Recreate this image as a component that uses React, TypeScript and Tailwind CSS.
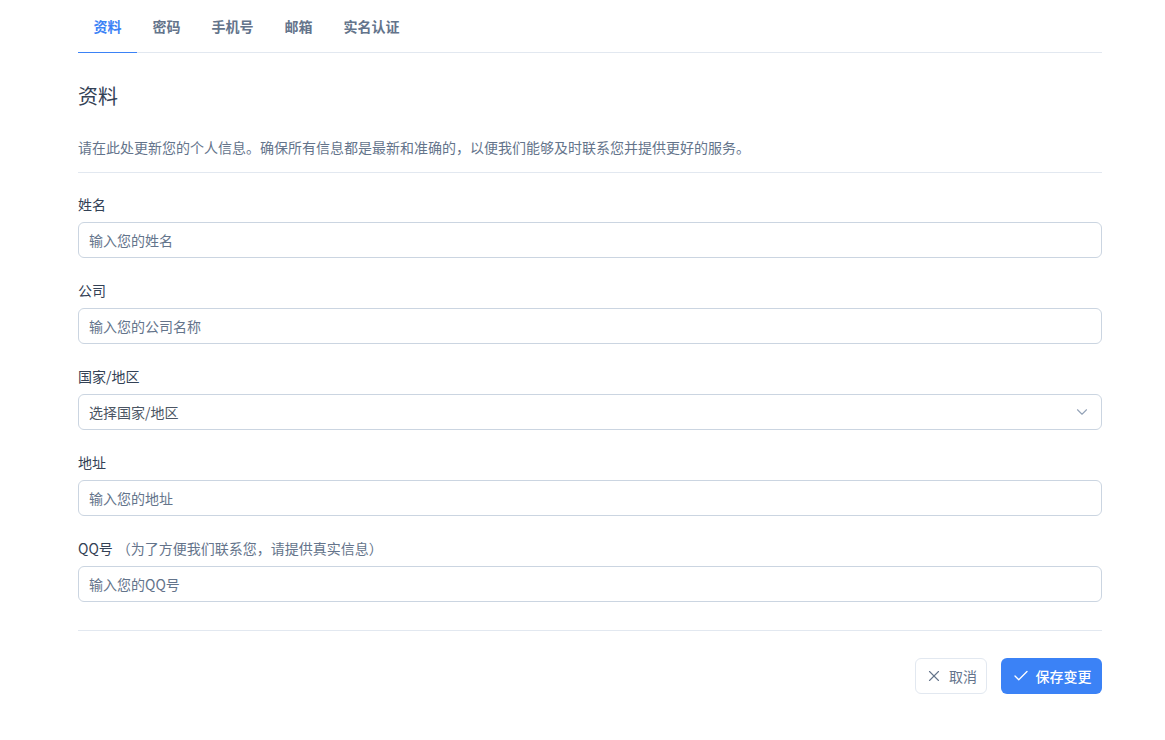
import { Check, ChevronDown, X } from "lucide-react";

const tabs = ["资料", "密码", "手机号", "邮箱", "实名认证"];

const font = { fontFamily: '"Noto Sans CJK SC", "Noto Sans", sans-serif' };

function Field({ label, hint, placeholder }: { label: string; hint?: string; placeholder: string }) {
  return (
    <div>
      <label className="block h-5 text-sm leading-5 text-[#334155]">
        {label}
        {hint && <span className="ml-1 text-[#64748b]">{hint}</span>}
      </label>
      <input
        placeholder={placeholder}
        className="mt-2 block h-9 w-full rounded-md border border-[#cbd5e1] bg-white px-2.5 text-sm text-[#334155] outline-none placeholder:text-[#64748b]"
      />
    </div>
  );
}

export default function App() {
  return (
    <div className="min-h-screen bg-white" style={font}>
      <div className="ml-[78px] w-[1024px]">
        <nav className="flex border-b border-[#e2e8f0]">
          {tabs.map((t, i) => (
            <button
              key={t}
              className={
                i === 0
                  ? "-mb-px h-[53px] border-b-[1.5px] border-[#3b82f6] px-[15.5px] text-sm font-bold text-[#3b82f6]"
                  : "-mb-px h-[53px] border-b-[1.5px] border-transparent px-[15.5px] text-sm font-bold text-[#64748b]"
              }
            >
              {t}
            </button>
          ))}
        </nav>

        <h2 className="mt-[29px] text-xl leading-7 text-[#334155]">资料</h2>
        <p className="mt-[27px] text-sm leading-5 text-[#64748b]">
          请在此处更新您的个人信息。确保所有信息都是最新和准确的，以便我们能够及时联系您并提供更好的服务。
        </p>
        <div className="mt-[15px] border-t border-[#e2e8f0]" />

        <form className="mt-[21px] flex flex-col gap-[22px]">
          <Field label="姓名" placeholder="输入您的姓名" />
          <Field label="公司" placeholder="输入您的公司名称" />
          <div>
            <label className="block h-5 text-sm leading-5 text-[#334155]">国家/地区</label>
            <div className="mt-2 flex h-9 w-full items-center justify-between rounded-md border border-[#cbd5e1] pl-2.5 pr-2.5 text-sm text-[#4b5563]">
              <span>选择国家/地区</span>
              <ChevronDown className="h-[18px] w-[18px] text-[#94a3b8]" strokeWidth={1.5} />
            </div>
          </div>
          <Field label="地址" placeholder="输入您的地址" />
          <Field label="QQ号" hint="（为了方便我们联系您，请提供真实信息）" placeholder="输入您的QQ号" />
        </form>

        <div className="mt-[28px] border-t border-[#e2e8f0]" />

        <div className="mt-[27px] flex justify-end gap-[14px]">
          <button className="flex h-9 w-[72px] items-center justify-center gap-1.5 rounded-md border border-[#e2e8f0] bg-white text-sm text-[#64748b]">
            <X className="h-[18px] w-[18px]" strokeWidth={1.5} />
            取消
          </button>
          <button className="flex h-9 w-[101px] items-center justify-center gap-1.5 rounded-md bg-[#3b82f6] text-sm font-medium text-white">
            <Check className="h-[18px] w-[18px]" strokeWidth={1.75} />
            保存变更
          </button>
        </div>
      </div>
    </div>
  );
}
